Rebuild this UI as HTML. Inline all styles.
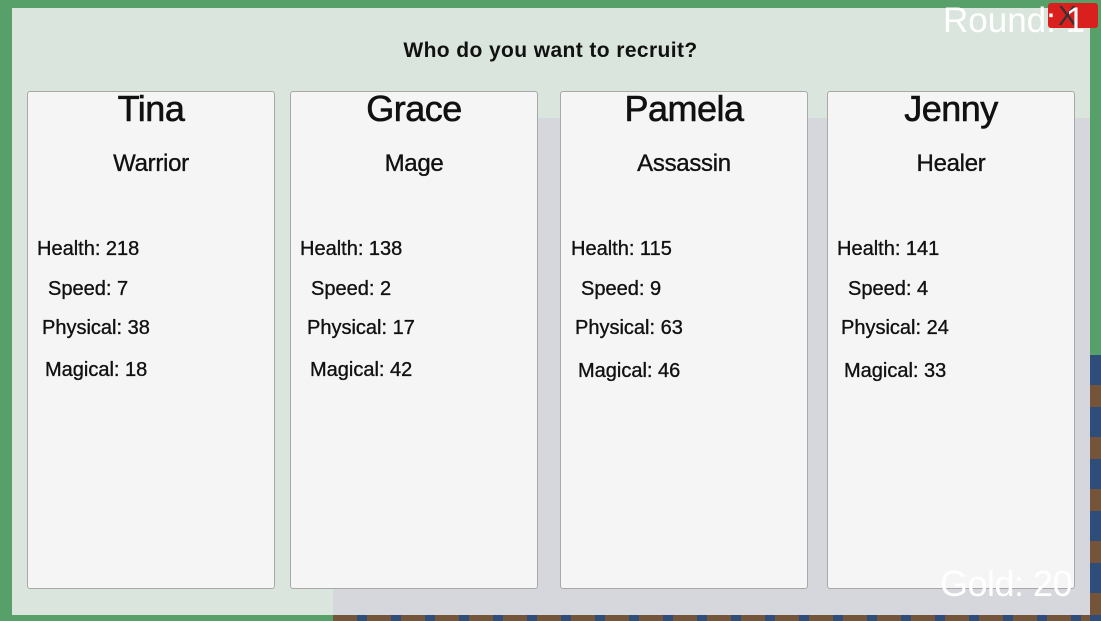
<!DOCTYPE html>
<html><head><style>
body{margin:0;width:1101px;height:621px;overflow:hidden;background:#57a06a;position:relative;font-family:"Liberation Sans",Arial,sans-serif}
.abs{position:absolute}
.panel{left:12px;top:8px;width:1078px;height:607px;background:#d9e5dd}
.map{left:333px;top:118px;width:757px;height:497px;background:#d5d7dc}
.mapb{left:333px;top:615px;width:768px;height:6px;background:repeating-linear-gradient(90deg,#75553a 0 24px,#2f4d7a 24px 34px)}
.mapr{left:1090px;top:355px;width:11px;height:266px;background:repeating-linear-gradient(180deg,#2f4d7a 0 30px,#75553a 30px 52px)}
.card{position:absolute;top:91px;width:246px;height:496px;background:#f5f5f5;border:1px solid #a8a8a8;border-radius:3px}
.t{position:absolute;white-space:nowrap;color:#111;line-height:1;-webkit-text-stroke:0.35px #111}
.name{font-size:36px;width:246px;text-align:center;left:0;top:91px;letter-spacing:-0.5px;-webkit-text-stroke:0.6px #111}
.cls{font-size:24px;width:246px;text-align:center;left:0;top:152px;letter-spacing:-0.3px}
.s{font-size:20px}
.w{-webkit-text-stroke:0}
</style></head><body>
<div class="abs panel"></div>
<div class="abs map"></div>
<div class="abs mapb"></div>
<div class="abs mapr"></div>
<div class="t" style="left:0;width:1101px;text-align:center;top:40px;font-size:21px;font-weight:bold;letter-spacing:0.4px;-webkit-text-stroke:0">Who do you want to recruit?</div>

<div class="card" style="left:27px"></div>
<div class="card" style="left:290px"></div>
<div class="card" style="left:560px"></div>
<div class="card" style="left:827px"></div>

<div class="t name" style="left:28px">Tina</div><div class="t cls" style="left:28px">Warrior</div>
<div class="t name" style="left:291px">Grace</div><div class="t cls" style="left:291px">Mage</div>
<div class="t name" style="left:561px">Pamela</div><div class="t cls" style="left:561px">Assassin</div>
<div class="t name" style="left:828px">Jenny</div><div class="t cls" style="left:828px">Healer</div>

<div class="t s" style="left:37px;top:239px">Health: 218</div>
<div class="t s" style="left:48px;top:279px">Speed: 7</div>
<div class="t s" style="left:42px;top:318px">Physical: 38</div>
<div class="t s" style="left:45px;top:360px">Magical: 18</div>

<div class="t s" style="left:300px;top:239px">Health: 138</div>
<div class="t s" style="left:311px;top:279px">Speed: 2</div>
<div class="t s" style="left:307px;top:318px">Physical: 17</div>
<div class="t s" style="left:310px;top:360px">Magical: 42</div>

<div class="t s" style="left:571px;top:239px">Health: 115</div>
<div class="t s" style="left:581px;top:279px">Speed: 9</div>
<div class="t s" style="left:575px;top:318px">Physical: 63</div>
<div class="t s" style="left:578px;top:361px">Magical: 46</div>

<div class="t s" style="left:837px;top:239px">Health: 141</div>
<div class="t s" style="left:848px;top:279px">Speed: 4</div>
<div class="t s" style="left:841px;top:318px">Physical: 24</div>
<div class="t s" style="left:844px;top:361px">Magical: 33</div>

<div class="abs" style="left:1048px;top:3px;width:50px;height:25px;background:#d9201f;border-radius:3px"></div>
<div class="t w" style="left:1058px;top:2px;font-size:28px;color:#333">X</div>
<div class="t w" style="left:943px;top:3px;font-size:35px;color:#fff;letter-spacing:0">Round: 1</div>
<div class="t w" style="left:940px;top:566px;font-size:36px;color:#fff;letter-spacing:-0.5px">Gold: 20</div>
</body></html>
